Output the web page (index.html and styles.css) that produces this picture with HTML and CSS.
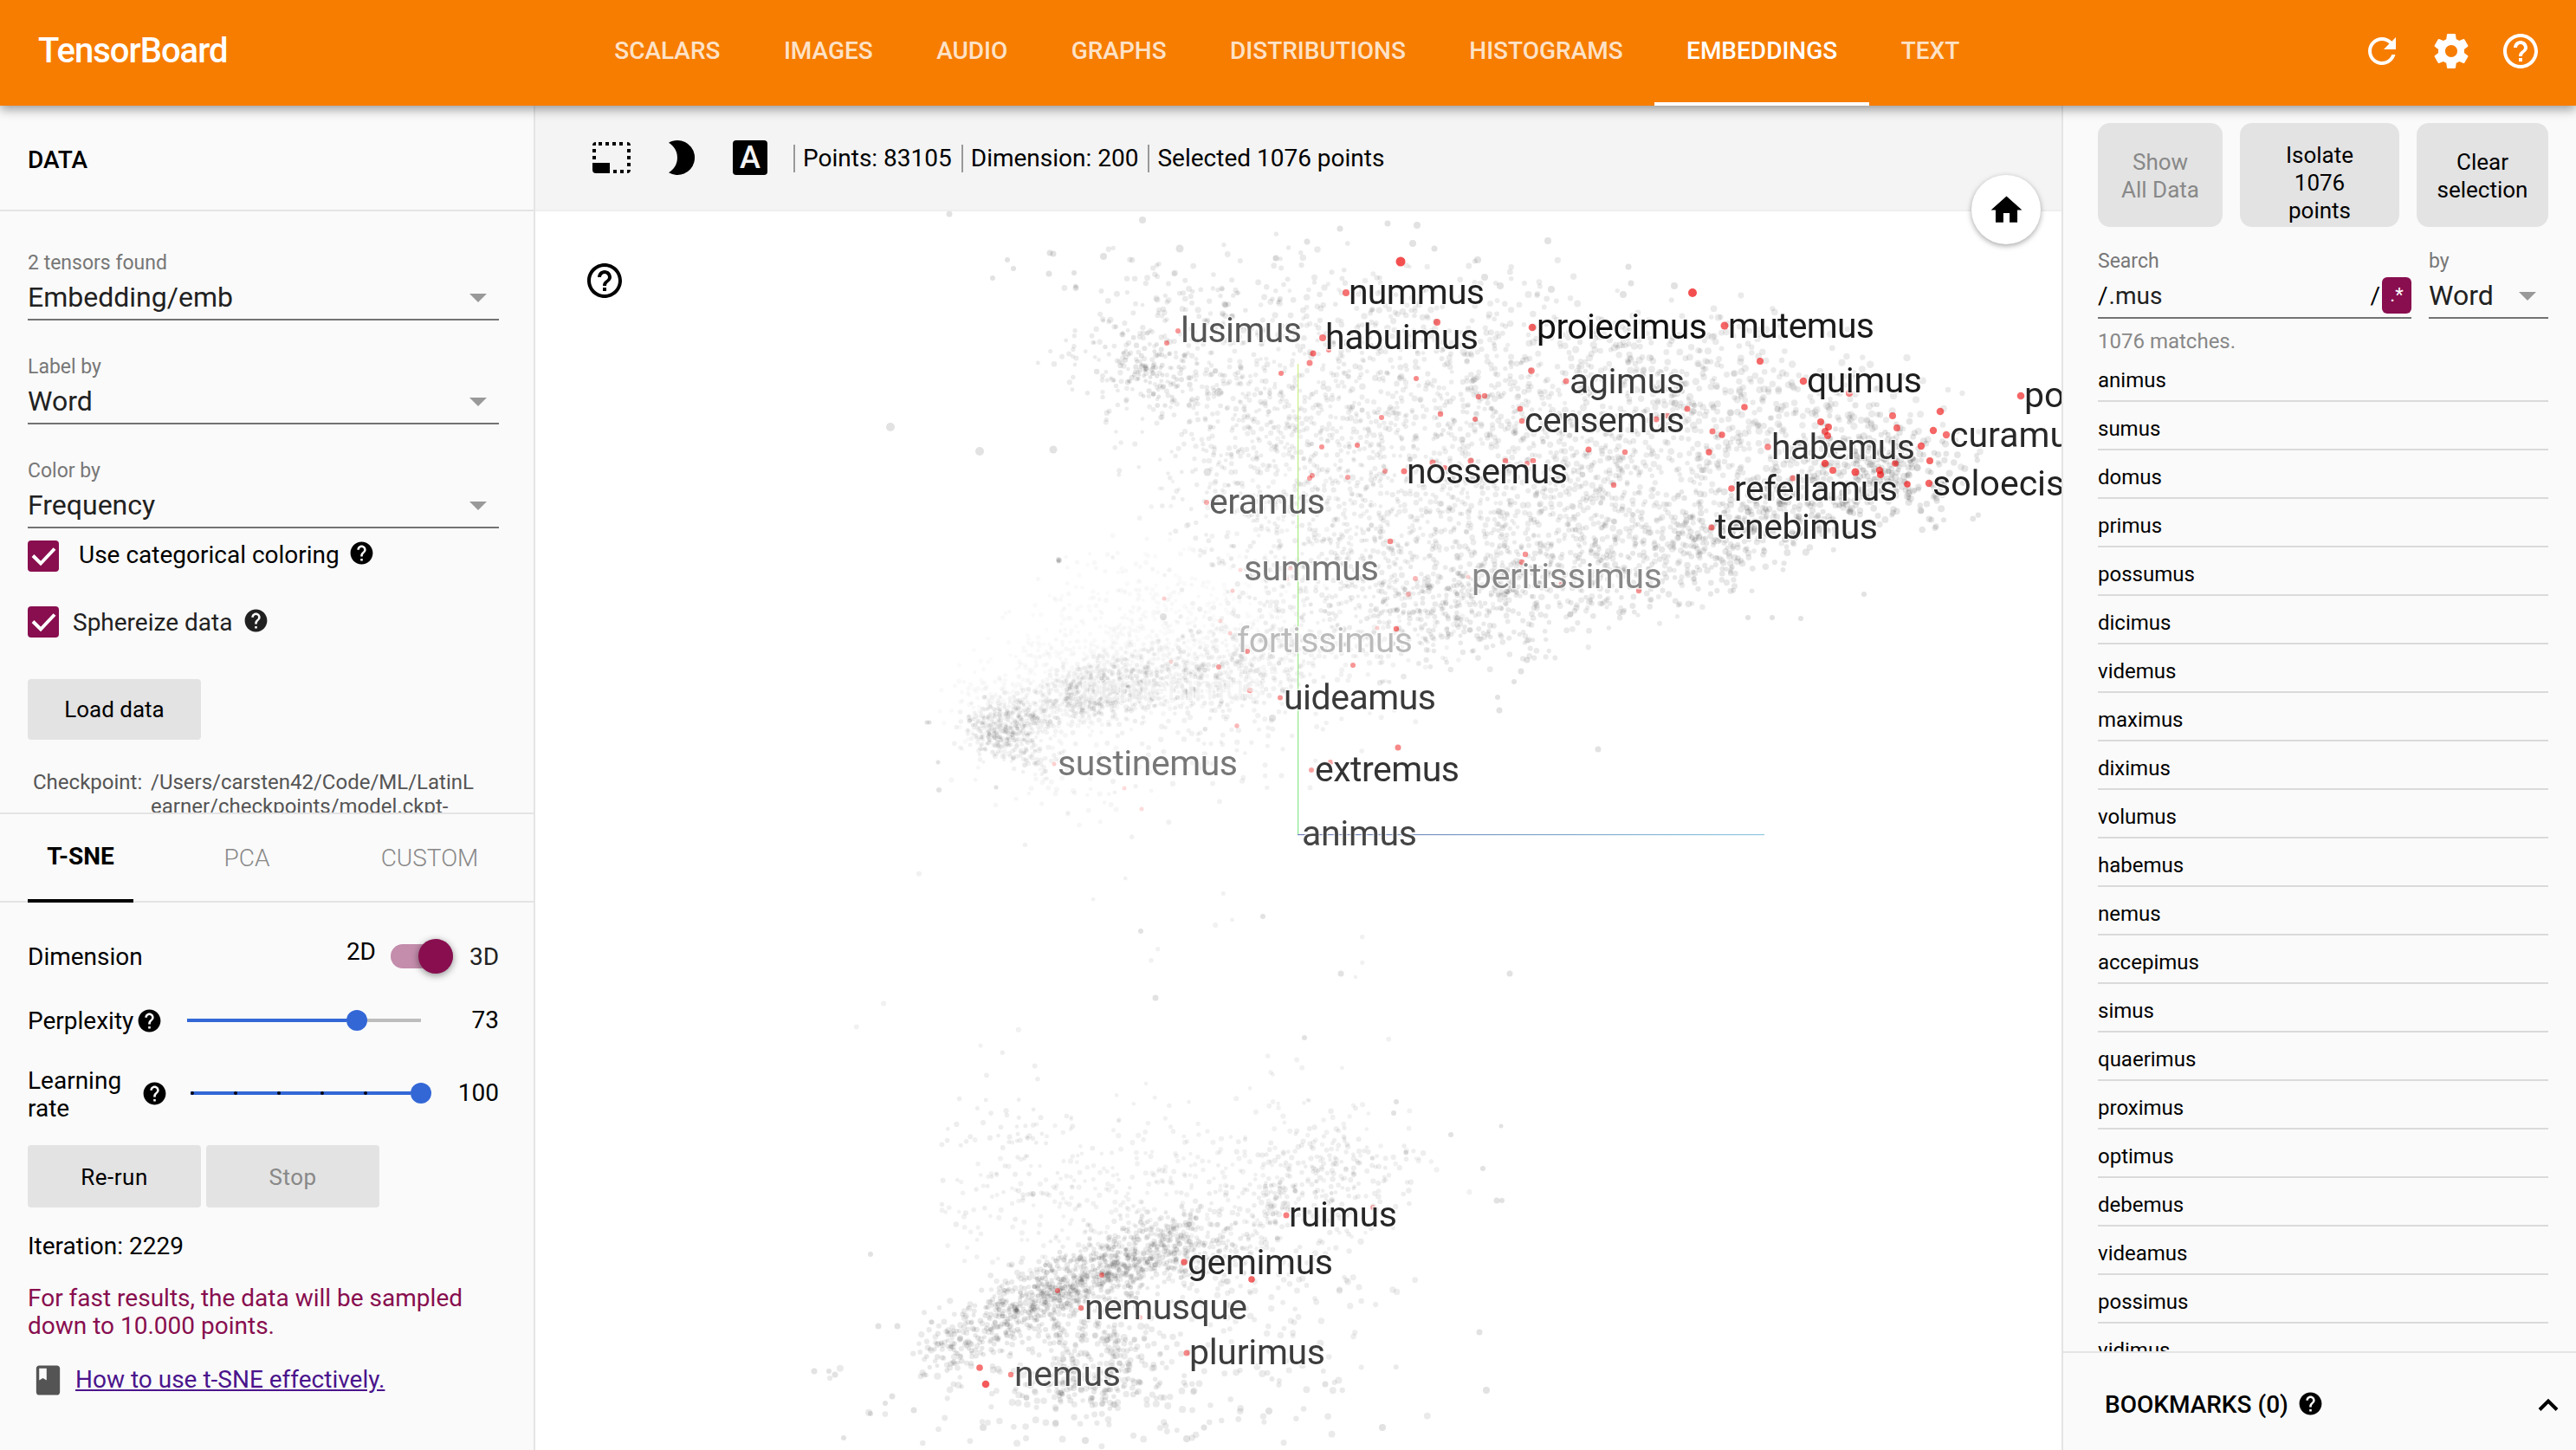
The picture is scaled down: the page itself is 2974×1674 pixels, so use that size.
FILE: index.html
```html
<!DOCTYPE html>
<html lang="en">
<head>
<meta charset="utf-8">
<title>TensorBoard</title>
<link rel="stylesheet" href="styles.css">
</head>
<body>
<svg class="defs" width="0" height="0">
  <symbol id="i-help" viewBox="0 0 24 24"><path d="M12 2C6.48 2 2 6.48 2 12s4.480 10 10 10 10-4.480 10-10S17.520 2 12 2zm1 17h-2v-2h2v2zm2.070-7.750l-.9.920C13.450 12.900 13 13.500 13 15h-2v-.5c0-1.100.450-2.100 1.170-2.830l1.240-1.260c.370-.360.590-.860.590-1.410 0-1.100-.9-2-2-2s-2 .9-2 2H8c0-2.210 1.790-4 4-4s4 1.790 4 4c0 .880-.360 1.680-.930 2.250z"/></symbol>
  <symbol id="i-help-outline" viewBox="0 0 24 24"><path d="M11 18h2v-2h-2v2zm1-16C6.480 2 2 6.480 2 12s4.480 10 10 10 10-4.480 10-10S17.520 2 12 2zm0 18c-4.410 0-8-3.590-8-8s3.590-8 8-8 8 3.590 8 8-3.590 8-8 8zm0-14c-2.210 0-4 1.790-4 4h2c0-1.100.9-2 2-2s2 .9 2 2c0 2-3 1.750-3 5h2c0-2.250 3-2.500 3-5 0-2.210-1.790-4-4-4z"/></symbol>
  <symbol id="i-refresh" viewBox="0 0 24 24"><path d="M17.650 6.350C16.200 4.900 14.210 4 12 4c-4.420 0-7.990 3.580-7.990 8s3.570 8 7.990 8c3.730 0 6.840-2.550 7.730-6h-2.080c-.820 2.330-3.040 4-5.650 4-3.310 0-6-2.690-6-6s2.690-6 6-6c1.660 0 3.140.690 4.220 1.780L13 11h7V4l-2.350 2.350z"/></symbol>
  <symbol id="i-settings" viewBox="0 0 24 24"><path d="M19.430 12.980c.040-.320.070-.640.070-.980s-.030-.660-.070-.980l2.110-1.650c.190-.150.240-.420.120-.640l-2-3.460c-.120-.220-.390-.3-.610-.220l-2.490 1c-.520-.4-1.080-.730-1.690-.980l-.380-2.650C14.460 2.180 14.250 2 14 2h-4c-.250 0-.460.180-.490.420l-.380 2.650c-.610.250-1.170.590-1.690.980l-2.490-1c-.230-.090-.490 0-.610.220l-2 3.460c-.130.220-.070.490.120.640l2.110 1.650c-.040.320-.070.650-.070.980s.030.660.070.980l-2.110 1.650c-.190.150-.240.420-.120.640l2 3.460c.120.220.390.3.610.220l2.490-1c.520.4 1.080.730 1.690.980l.380 2.650c.030.240.240.420.490.420h4c.250 0 .460-.180.490-.420l.380-2.650c.610-.250 1.170-.590 1.690-.980l2.490 1c.230.090.490 0 .610-.220l2-3.460c.120-.220.070-.490-.120-.640l-2.110-1.650zM12 15.500c-1.930 0-3.500-1.570-3.500-3.500s1.570-3.500 3.500-3.500 3.500 1.570 3.500 3.500-1.570 3.500-3.500 3.500z"/></symbol>
  <symbol id="i-home" viewBox="0 0 24 24"><path d="M10 20v-6h4v6h5v-8h3L12 3 2 12h3v8z"/></symbol>
  <symbol id="i-check" viewBox="0 0 36 36"><path d="M6 17.500l9 9L31 9.500" fill="none" stroke="#fff" stroke-width="4"/></symbol>
  <symbol id="i-book" viewBox="0 0 24 24"><path d="M18 2H6c-1.100 0-2 .9-2 2v16c0 1.100.9 2 2 2h12c1.100 0 2-.9 2-2V4c0-1.100-.9-2-2-2zM6 4h5v8l-2.500-1.500L6 12V4z"/></symbol>
  <symbol id="i-select" viewBox="0 0 44 36"><path d="M0 24h20v12H4a4 4 0 0 1-4-4zM7 0h4v4H7zM15 0h4v4h-4zM23 0h4v4h-4zM31 0h4v4h-4zM0 4a4 4 0 0 1 4-4v4zM40 0a4 4 0 0 1 4 4h-4zM0 8h4v4H0zM0 16h4v4H0zM40 8h4v4h-4zM40 16h4v4h-4zM40 24h4v4h-4zM44 32a4 4 0 0 1-4 4v-4zM24 32h4v4h-4zM32 32h4v4h-4z"/></symbol>
  <symbol id="i-night" viewBox="0 0 30 40"><path d="M10 0C6.500 0 3 .9 0 2.700a20 20 0 0 1 0 34.600A20 20 0 1 0 10 0z"/></symbol>
</svg>

<header class="topbar">
  <h1 class="brand">TensorBoard</h1>
  <nav class="tabs">
    <a>SCALARS</a><a>IMAGES</a><a>AUDIO</a><a>GRAPHS</a><a>DISTRIBUTIONS</a><a>HISTOGRAMS</a><a class="on">EMBEDDINGS</a><a>TEXT</a>
  </nav>
  <div class="top-icons">
    <svg><use href="#i-refresh"/></svg>
    <svg><use href="#i-settings"/></svg>
    <svg><use href="#i-help-outline"/></svg>
  </div>
</header>

<main class="workspace">
  <aside class="left">
    <h2 class="panel-title">DATA</h2>
    <section class="data">
      <div class="select"><label>2 tensors found</label><div class="value">Embedding/emb<i></i></div></div>
      <div class="select"><label>Label by</label><div class="value">Word<i></i></div></div>
      <div class="select"><label>Color by</label><div class="value">Frequency<i></i></div></div>
      <div class="check wide"><svg class="box"><use href="#i-check"/></svg><span>Use categorical coloring</span><svg class="help"><use href="#i-help"/></svg></div>
      <div class="check soft"><svg class="box"><use href="#i-check"/></svg><span>Sphereize data</span><svg class="help"><use href="#i-help"/></svg></div>
      <button class="btn load">Load data</button>
      <dl class="ckpt"><dt>Checkpoint:</dt><dd>/Users/carsten42/Code/ML/LatinL<br>earner/checkpoints/model.ckpt-</dd></dl>
    </section>
    <nav class="methods"><a class="on">T-SNE</a><a>PCA</a><a>CUSTOM</a></nav>
    <section class="tsne">
      <div class="row dim"><span>Dimension</span><span class="two">2D</span><div class="toggle"><b></b></div><span class="three">3D</span></div>
      <div class="row perp"><span>Perplexity</span><svg class="help"><use href="#i-help"/></svg>
        <div class="slider s1"><div class="fill"></div><b></b></div><output>73</output></div>
      <div class="row rate"><span>Learning<br>rate</span><svg class="help"><use href="#i-help"/></svg>
        <div class="slider s2"><div class="fill"><u></u><u></u><u></u><u></u><u></u><u></u></div><b></b></div><output>100</output></div>
      <div class="buttons"><button class="btn">Re-run</button><button class="btn off">Stop</button></div>
      <p class="iter">Iteration: 2229</p>
      <p class="warn">For fast results, the data will be sampled<br>down to 10.000 points.</p>
      <div class="howto"><svg><use href="#i-book"/></svg><a>How to use t-SNE effectively.</a></div>
    </section>
  </aside>

  <section class="center">
    <div class="toolbar">
      <svg class="t-select"><use href="#i-select"/></svg>
      <svg class="t-night"><use href="#i-night"/></svg>
      <span class="t-labels">A</span>
      <span class="stat">Points: 83105</span><span class="stat">Dimension: 200</span><span class="stat">Selected 1076 points</span>
    </div>
    <div class="plot">
      <canvas id="cloud" width="1762" height="1430"></canvas>
      <svg class="labels" viewBox="618 244 1762 1430">
        <defs>
          <linearGradient id="gy" gradientUnits="userSpaceOnUse" x1="0" y1="420" x2="0" y2="963"><stop offset="0" stop-color="#d2f08a"/><stop offset=".4" stop-color="#a5ea80"/><stop offset="1" stop-color="#86e890"/></linearGradient>
          <linearGradient id="gb" gradientUnits="userSpaceOnUse" x1="1498" y1="0" x2="2037" y2="0"><stop offset="0" stop-color="#6f7fb8"/><stop offset="1" stop-color="#93cbe0"/></linearGradient>
        </defs>
        <rect x="1498" y="420" width="1.200" height="543" fill="url(#gy)"/>
        <rect x="1498" y="963" width="539" height="1.200" fill="url(#gb)"/>
        <g id="words"></g>
      </svg>
      <svg class="plot-help"><use href="#i-help-outline"/></svg>
    </div>
    <div class="home"><svg><use href="#i-home"/></svg></div>
  </section>

  <aside class="right">
    <div class="actions"><button class="off">Show<br>All Data</button><button class="mid">Isolate<br>1076<br>points</button><button>Clear<br>selection</button></div>
    <div class="search">
      <div class="field query"><label>Search</label><div class="value"><span>/</span><span class="term">.mus</span><span class="end">/</span><b>.*</b></div></div>
      <div class="field by"><label>by</label><div class="value">Word<i></i></div></div>
    </div>
    <p class="matches">1076 matches.</p>
    <ul class="results">
      <li>animus</li><li>sumus</li><li>domus</li><li>primus</li><li>possumus</li><li>dicimus</li><li>videmus</li><li>maximus</li><li>diximus</li><li>volumus</li><li>habemus</li><li>nemus</li><li>accepimus</li><li>simus</li><li>quaerimus</li><li>proximus</li><li>optimus</li><li>debemus</li><li>videamus</li><li>possimus</li><li>vidimus</li>
    </ul>
    <footer class="bookmarks"><span>BOOKMARKS (0)</span><svg class="help"><use href="#i-help"/></svg>
      <svg class="chev" viewBox="0 0 24 16"><path d="M2 13.500L12 3.500l10 10" fill="none" stroke="#000" stroke-width="4"/></svg></footer>
  </aside>
</main>
<script src="script.js"></script>
</body>
</html>
```
FILE: styles.css
```css
* { box-sizing: border-box; }
body { margin: 0; width: 2974px; height: 1674px; overflow: hidden; display: flex; flex-direction: column; font: 28px/32px Roboto, "Liberation Sans", sans-serif; color: #000; background: #fff; }
h1, h2, p, ul, dl, dd { margin: 0; padding: 0; }
button { border: 0; font: inherit; color: inherit; padding: 0; }
svg { display: block; flex: none; fill: currentColor; }
.defs { position: absolute; }
.help { width: 31px; height: 31px; }

/* top bar */
.topbar { height: 122px; flex: none; background: #f77d00; color: #fff; display: flex; align-items: center; padding: 0 40px 4px 44px; z-index: 2; box-shadow: 0 4px 12px rgba(0,0,0,.4); }
.brand { font-size: 40px; font-weight: 500; line-height: 48px; letter-spacing: -1px; width: 628.5px; }
.tabs { display: flex; align-self: stretch; margin-bottom: -4px; }
.tabs a { padding: 1px 36.7px 0; line-height: 116px; font-weight: 500; color: rgba(255,255,255,.8); border-bottom: 4px solid transparent; }
.tabs .on { color: #fff; border-color: #fff; }
.top-icons { margin-left: auto; display: flex; gap: 32px; }
.top-icons svg { width: 48px; height: 48px; }

.workspace { flex: 1; display: flex; min-height: 0; }

/* left panel */
.left { width: 618px; flex: none; background: #fafafa; border-right: 2px solid #e4e4e4; display: flex; flex-direction: column; }
.panel-title { height: 122px; flex: none; padding: 47px 32px 0; font-size: 28px; line-height: 32px; font-weight: 500; border-bottom: 2px solid #e4e4e4; }
.data { height: 694px; flex: none; padding: 42px 40px 0 32px; overflow: hidden; }
.select { height: 120px; }
.select label, .field label { display: block; font-size: 23px; height: 32px; line-height: 35px; color: #777; }
.select .value, .field .value { display: flex; align-items: center; justify-content: space-between; font-size: 32px; line-height: 48px; height: 52px; border-bottom: 2px solid #737373; color: #212121; }
.select .value i, .by i { border: 10px solid transparent; border-top-color: #999; border-bottom: 0; margin-right: 14px; margin-top: 2px; }
.check { display: flex; height: 36px; margin-bottom: 40px; }
.check.wide { margin-top: -22px; }
.check .box { width: 36px; height: 36px; border-radius: 4px; background: #880e4f; }
.check span { line-height: 37px; margin-left: 16px; }
.check .help { margin-left: 12px; margin-top: 1px; }
.check.wide span { margin-left: 23px; line-height: 34px; }
.check.wide .help { margin-left: 10px; margin-top: -1px; }
.soft { color: #212121; }
.btn { width: 200px; height: 72px; border-radius: 4px; background: #e3e3e3; font-size: 26px; }
.load { height: 70px; margin-top: 48px; display: block; }
.off { color: #888 !important; }
.ckpt { display: flex; margin: 35px 0 0 6px; font-size: 24px; line-height: 28px; color: #555; }
.ckpt dt { width: 136px; }
.methods { height: 104px; flex: none; border-top: 2px solid #e4e4e4; border-bottom: 2px solid #e4e4e4; display: flex; padding-left: 32px; color: #888; font-weight: 300; }
.methods a { line-height: 102px; margin-bottom: -2px; text-align: center; width: 128px; margin-left: 67px; }
.methods a + a + a { margin-left: 55px; width: 184px; }
.methods .on { margin-left: 0; width: 122px; color: #000; font-weight: 700; border-bottom: 4px solid #000; line-height: 98px; }
.tsne { padding: 30px 40px 0 32px; }
.row { display: flex; align-items: center; height: 64px; }
.row span { position: relative; top: 1px; }
.row output { margin-left: auto; }
.dim .two { margin-left: auto; padding-bottom: 12px; }
.dim .three { width: 34px; margin-left: 19px; color: #212121; }
.toggle { width: 72px; height: 28px; border-radius: 14px; background: #c48dac; margin-left: 17px; display: flex; align-items: center; justify-content: flex-end; }
.toggle b { width: 40px; height: 40px; border-radius: 50%; background: #880e4f; box-shadow: 0 2px 8px rgba(0,0,0,.45); }
.perp { margin-top: 10px; }
.perp .help { margin-left: 3px; }
.slider { height: 24px; display: flex; align-items: center; }
.slider b { width: 24px; height: 24px; border-radius: 50%; background: #3367d6; flex: none; }
.slider .fill { height: 4px; background: #3367d6; }
.s1 { margin-left: 28px; width: 270px; background: linear-gradient(#bdbdbd, #bdbdbd) 0 50% / 100% 4px no-repeat; }
.s1 .fill { width: 184px; }
.rate { margin-top: 20px; }
.rate span { width: 126px; padding-top: 2px; }
.rate .help { margin-left: 5px; }
.s2 { margin-left: 26px; width: 278px; margin-right: -13px; }
.s2 .fill { flex: 1; display: flex; justify-content: space-between; }
.s2 u { width: 4px; height: 4px; border-radius: 50%; background: #001; }
.s2 u:last-child { background: none; }
.buttons { display: flex; gap: 6px; margin-top: 28px; }
.buttons .btn { letter-spacing: .5px; padding-top: 1px; }
.iter { margin-top: 29px; }
.warn { margin-top: 28px; color: #880e4f; }
.howto { display: flex; align-items: center; margin-top: 24px; }
.howto svg { width: 41px; height: 41px; margin: 2px 11px 0 3px; color: #545454; }
.howto a { color: #4a148c; text-decoration: underline; }

/* projector */
.center { flex: 1; min-width: 0; position: relative; display: flex; flex-direction: column; }
.toolbar { height: 122px; flex: none; background: #f4f4f4; border-bottom: 2px solid #eee; display: flex; align-items: center; padding: 0 0 0 66px; }
.t-select { width: 44px; height: 36px; }
.t-night { width: 30px; height: 40px; margin-left: 44px; }
.t-labels { width: 40px; height: 40px; border-radius: 4px; background: #000; color: #f4f4f4; margin: 0 30px 0 44px; text-align: center; font-size: 36px; line-height: 40px; font-weight: 500; }
.stat { border-left: 2px solid #999; padding: 0 11px 0 9px; white-space: nowrap; line-height: 32px; margin-top: 1px; }
.plot { flex: 1; position: relative; overflow: hidden; }
.plot canvas, .plot .labels { position: absolute; left: 0; top: 0; width: 1762px; height: 1430px; }
.labels text { font-size: 41px; paint-order: stroke; stroke: #fff; stroke-width: 3px; stroke-opacity: .7; }
.plot-help { position: absolute; left: 56px; top: 56px; width: 48px; height: 48px; }
.home { position: absolute; right: 24px; top: 80px; width: 80px; height: 80px; border-radius: 50%; background: #fff; box-shadow: 0 2px 6px rgba(0,0,0,.35); display: flex; align-items: center; justify-content: center; }
.home svg { width: 43px; height: 43px; }

/* inspector */
.right { width: 594px; flex: none; background: #fafafa; border-left: 2px solid #e4e4e4; padding-top: 20px; display: flex; flex-direction: column; }
.actions { display: flex; gap: 20px; margin: 0 32px 0 40px; height: 120px; flex: none; }
.actions button { width: 144px; border-radius: 14px; background: #e3e3e3; font-size: 26px; line-height: 32px; padding-top: 2px; }
.actions .mid { width: 184px; padding-top: 17px; }
.actions button:last-child { width: 152px; }
.search { display: flex; gap: 20px; margin: 22px 32px 0 40px; }
.query { width: 362px; }
.by { width: 138px; }
.query .value { font-size: 28px; justify-content: flex-start; color: #000; }
.query .value span { padding-top: 2px; }
.query .term { color: #212121; margin-left: 1px; }
.query .end { margin-left: auto; }
.query b { width: 34px; height: 42px; border-radius: 6px; background: #880e4f; color: #fff; margin-left: 2px; font-weight: 400; font-size: 22px; line-height: 42px; text-align: center; }
.matches { margin: 10px 0 0 40px; font-size: 24px; color: #888; }
.results { list-style: none; flex: 1; min-height: 0; overflow: hidden; margin: -2px 32px 0 40px; font-size: 24px; }
.results li { height: 56px; border-bottom: 2px solid #dadada; line-height: 62px; }
.bookmarks { height: 114px; flex: none; border-top: 2px solid #e4e4e4; display: flex; align-items: center; padding: 7px 20px 0 48px; font-weight: 500; }
.bookmarks .help { margin-left: 10px; margin-top: -2px; }
.chev { width: 24px; height: 16px; margin-left: auto; }
```
FILE: script.js
```js
// word, left edge, baseline, width, grey level
const words = [
  ['peruenimus', 1249, 808, 207, '#f1f1f1'],
  ['nummus', 1558, 351, 155, '#1f1f1f'], ['lusimus', 1364, 395, 138, '#555'], ['habuimus', 1531, 403, 175, '#222'],
  ['proiecimus', 1775, 390.5, 195, '#111'], ['mutemus', 1996, 390, 167, '#1a1a1a'], ['agimus', 1813, 454, 131, '#3a3a3a'],
  ['censemus', 1761, 499, 183, '#333'], ['quimus', 2087, 453, 131, '#1c1c1c'], ['possemus', 2338, 469.5, 0, '#222'],
  ['curamus', 2252, 516, 0, '#282828'], ['habemus', 2046, 529.5, 164, '#333'], ['refellamus', 2003, 578, 187, '#262626'],
  ['soloecismus', 2232, 571.5, 0, '#222'], ['tenebimus', 1981, 621.5, 186, '#282828'], ['nossemus', 1625, 557.5, 184, '#262626'],
  ['peritissimus', 1700, 679, 218, '#888'], ['eramus', 1397, 592.5, 132, '#5e5e5e'], ['summus', 1437, 669.5, 154, '#777'],
  ['fortissimus', 1429, 752.5, 201, '#bbb'], ['uideamus', 1483, 819, 174, '#3a3a3a'], ['sustinemus', 1222, 895, 206, '#777'],
  ['extremus', 1519, 901.5, 165, '#333'], ['animus', 1504, 976, 131, '#444'], ['ruimus', 1489, 1416, 123, '#262626'],
  ['gemimus', 1372, 1471, 166, '#2a2a2a'], ['nemusque', 1253, 1523, 186, '#444'], ['plurimus', 1374, 1574.5, 155, '#3c3c3c'],
  ['nemus', 1172, 1600, 121, '#484848'],
];
const g = document.getElementById('words');
for (const [w, x, y, len, fill] of words) {
  const t = document.createElementNS('http://www.w3.org/2000/svg', 'text');
  t.setAttribute('x', x - 1); t.setAttribute('y', y); t.setAttribute('fill', fill);
  if (w === 'peruenimus') t.setAttribute('opacity', .7);
  if (len) t.setAttribute('textLength', len + 2);
  t.textContent = w;
  g.appendChild(t);
}

const ctx = document.getElementById('cloud').getContext('2d');
ctx.translate(-618, -244);
let seed = 12345;
const rnd = () => { seed = (seed * 1664525 + 1013904223) >>> 0; return seed / 4294967296; };
const gauss = () => Math.sqrt(-2 * Math.log(rnd() + 1e-9)) * Math.cos(6.2832 * rnd());
const dot = (x, y, r, c) => { ctx.fillStyle = c; ctx.beginPath(); ctx.arc(x, y, r, 0, 6.2832); ctx.fill(); };

// elliptical clusters: cx, cy, spread along, spread across, angle (deg), count, radius, alpha
const clusters = [
  [1340, 430, 70, 34, 15, 170, 2.7, .085], [1330, 432, 28, 16, 20, 70, 2.7, .11], [1410, 345, 80, 32, 0, 120, 3, .09],
  [1470, 480, 90, 60, 10, 400, 2.6, .075], [1600, 520, 110, 90, 0, 600, 2.7, .075], [1640, 380, 110, 45, 5, 180, 3.2, .09],
  [1780, 500, 110, 80, 0, 520, 3, .085], [1930, 430, 110, 42, 10, 180, 3.5, .09], [2060, 470, 100, 46, 10, 220, 3.6, .09],
  [2180, 540, 50, 30, 15, 230, 3.4, .11], [2085, 580, 70, 24, -12, 190, 3.4, .11], [1960, 635, 80, 30, -18, 270, 3.2, .1],
  [1830, 625, 100, 50, -14, 360, 2.9, .085], [1700, 700, 75, 36, -10, 300, 2.9, .095], [1560, 660, 90, 50, -5, 330, 2.6, .075],
  [1510, 740, 90, 30, -8, 280, 2.6, .055], [1340, 785, 90, 22, -14, 520, 2.5, .04], [1245, 805, 55, 16, -20, 420, 2.4, .05],
  [1160, 842, 26, 18, -12, 330, 2.4, .055], [1350, 795, 75, 16, -4, 200, 2.6, .07], [1400, 830, 110, 42, 0, 150, 2.7, .06],
  [1320, 730, 90, 40, -14, 500, 2.5, .018], [1200, 790, 60, 20, -20, 250, 2.5, .022], [1180, 865, 30, 10, 25, 70, 2.6, .06],
  [1300, 680, 60, 40, 0, 60, 2.5, .03], [1460, 610, 60, 50, 0, 120, 2.6, .055], [1860, 560, 140, 60, -8, 330, 3.2, .085],
  [1220, 900, 60, 25, 0, 50, 2.6, .04],
  [1230, 1490, 75, 18, -27, 420, 2.8, .1], [1315, 1458, 55, 22, -15, 330, 2.8, .09], [1180, 1505, 45, 20, -25, 160, 2.9, .09],
  [1400, 1420, 110, 30, -14, 260, 2.7, .075], [1520, 1360, 60, 30, -14, 210, 2.7, .07], [1260, 1560, 45, 34, -15, 210, 3.1, .09],
  [1105, 1550, 28, 24, -20, 80, 3.1, .09], [1250, 1390, 110, 45, 0, 220, 2.6, .06], [1400, 1340, 130, 50, 0, 190, 2.6, .06],
  [1160, 1330, 50, 50, 0, 80, 2.7, .07], [1310, 1600, 150, 40, 0, 190, 3.4, .09], [1460, 1490, 80, 45, 0, 110, 3.2, .08],
  [1270, 1600, 35, 16, -10, 60, 3.1, .1], [1300, 1100, 180, 110, -10, 24, 2.6, .06],
];
for (const [cx, cy, a, b, deg, n, r, al] of clusters) {
  const c = Math.cos(deg * Math.PI / 180), s = Math.sin(deg * Math.PI / 180);
  for (let i = 0; i < n; i++) {
    let u = gauss(), v = gauss();
    while (u * u + v * v > 6.2) { u = gauss(); v = gauss(); }
    u *= a; v *= b;
    const x = cx + u * c - v * s, y = cy + u * s + v * c;
    if (y > 1200 && y < 1500 && x < 1070 + (rnd() * 40)) continue;
    dot(x, y, r * (.85 + rnd() * .35), `rgba(20,20,20,${al})`);
  }
}
// isolated outliers
for (const [x, y, r] of [[1028,493,5],[1131,521,5],[1216,519,4.5],[1096,247,3.5],[1319,254,4],[1362,287,4.5],[1407,453,5],[1394,545,4.5],[1274,296,4],[1212,292,3.5],[1216,293,3.5],[1163,300,3],[1170,310,3],[1146,321,3],[1211,316,3.5],[1240,315,3],[1222,646,3],[1223,647,3],[1222,648,2.5],[1343,712,4],[1436,805,4],[1469,829,4],[1070,834,2.5],[1073,834,2.5],[1845,865,3.5],[1731,820,3.5],[1729,805,3],[1748,787,3],[1763,762,3.5],[1756,775,3.5],[1547,264,3.5],[1602,258,3.5],[1636,260,4],[1631,281,4],[1656,287,3.5],[1509,279,3.5],[1787,278,4],[1880,308,3.5],[1883,327,3.5],[1933,330,4],[1874,340,4],[1706,300,4],[1714,320,4],[1732,330,4],[1791,334,4],[2152,686,3],[2079,714,3],[2046,713,3],[2018,713,3],[1548,1124,3.5],[1743,1124,3.5],[1334,1152,3.5],[1317,1075,3],[1458,1058,3],[1506,1198,3],[1612,1272,3],[1609,1285,3],[1733,1300,2.5],[1712,1349,3],[1728,1386,3.5],[1734,1386,3],[1708,1538,3.5],[1716,1605,4],[1596,1648,4],[1005,1448,3],[1014,1531,3.5],[1036,1531,3.5],[940,1583,3.5],[957,1583,3],[964,1587,3.5],[974,1660,3],[1005,1632,3],[1030,1612,3.5],[1022,1620,3],[1055,1628,3.5],[1083,880,2.5],[1084,912,3],[1150,909,2.5],[1675,1310,3],[1530,1598,3.5],[1465,1629,4],[1390,1648,3.5],[1135,1648,4],[1253,1663,4],[1370,1661,4]]) dot(x, y, r, 'rgba(20,20,20,.12)');

// selected points: x, y, radius, alpha
const hit = [[1617,302,5.5,.75],[1554,338,4,.6],[1659,372,4,.6],[1527,390,4,.55],[1516,408,3.5,.6],[1512,419,3.5,.5],[1534,404,3,.5],[1479,431,3,.5],[1360,382,3,.45],[1347,396,3,.45],[1635,437,3,.5],[1663,478,3.2,.5],[1595,482,3,.45],[1526,516,3,.45],[1567,514,3,.5],[1512,552,3,.4],[1515,549,3,.4],[1556,551,3,.4],[1599,544,3,.4],[1621,544,3.5,.55],[1654,534,3.5,.5],[1698,532,3.5,.5],[1668,540,3,.5],[1393,580,3,.35],[1605,625,3.3,.5],[1432,658,2.5,.15],[1490,656,2.5,.2],[1486,669,2.5,.15],[1634,668,3,.3],[1626,686,3,.3],[1423,682,2.5,.2],[1344,691,2.5,.2],[1409,717,2.5,.15],[1420,731,2.5,.2],[1612,726,3.2,.55],[1440,752,3,.45],[1407,770,3,.4],[1352,764,2.5,.15],[1562,768,3,.45],[1443,797,3.3,.5],[1478,805.5,3,.45],[1428,838,2.7,.3],[1614,863,3.5,.5],[1536,880,3,.4],[1514,889,3,.4],[1217,882,2.5,.2],[1298,910,2.5,.15],[1318,934,2.5,.15],[1590,725,2.5,.2],[1954,338,5,.75],[1769,378,4.3,.65],[1991,376,4.5,.65],[1768,428,3.8,.55],[1808,440,3.5,.5],[2032,417,4,.65],[2082,440,4.3,.65],[2135,454,4,.55],[1707,458,3.2,.5],[1714,457,3.2,.5],[1703,484,3,.5],[1755,472,3.3,.55],[1757,486,3.3,.5],[1948,472,3.5,.55],[1912,484,3.5,.5],[1925,480,3.3,.4],[2014,470,3.8,.6],[1977,498,3.5,.55],[1988,502,3.7,.6],[1973,522,3.7,.6],[1834,519,3.5,.55],[1876,522,3.2,.5],[1863,560,3.2,.5],[1738,532,3.2,.5],[1763,535,3,.45],[1770,532,3.3,.5],[2041,516,3.8,.5],[1999,564,3.8,.6],[2070,552,3.5,.5],[1976,609,3.5,.55],[2102,487,4,.65],[2111,493,4,.65],[2107,498,4,.6],[2110,503,4,.65],[2107,535,4.3,.7],[2116,543,4,.65],[2142,545,4.5,.7],[2170,543,4.2,.65],[2171,548,4,.7],[2188,535,3.8,.65],[2218,515,4.2,.65],[2228,532,4,.65],[2202,559,3.8,.7],[2227,558,4.2,.65],[2185,480,4,.6],[2190,494,4,.6],[2232,497,4.2,.65],[2247,502,4.2,.6],[2240,475,4.3,.65],[2333,457,4.3,.65],[1761,640,3.2,.45],[1757,649,3.2,.45],[1803,675,3.2,.4],[1892,682,3.2,.45],[1695,666,2.5,.2],[1485,1403,3.5,.55],[1585,1394,3,.35],[1367,1457,3.7,.6],[1445,1477,3.8,.65],[1272,1472,3,.5],[1221,1490,3,.5],[1248,1510,3.2,.5],[1316,1521,3,.25],[1370,1562,3.5,.5],[1131,1579,3.8,.6],[1138,1598,4.3,.7],[1167,1587,3.2,.5]];
for (const [x, y, r, a] of hit) dot(x, y, r, `rgba(240,20,20,${a})`);
```
